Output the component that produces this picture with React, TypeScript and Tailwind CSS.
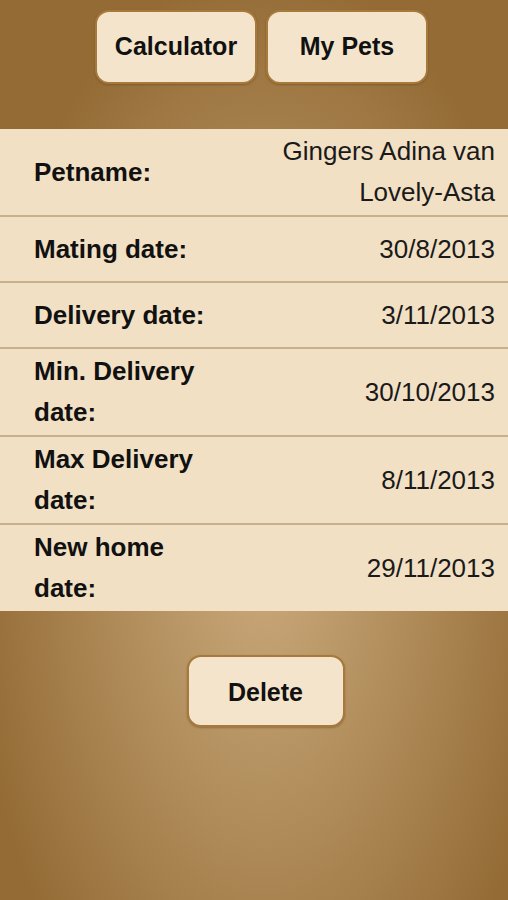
import React from "react";

interface Row {
  label: string;
  value: string;
}

const rows: Row[] = [
  { label: "Petname:", value: "Gingers Adina van Lovely-Asta" },
  { label: "Mating date:", value: "30/8/2013" },
  { label: "Delivery date:", value: "3/11/2013" },
  { label: "Min. Delivery date:", value: "30/10/2013" },
  { label: "Max Delivery date:", value: "8/11/2013" },
  { label: "New home date:", value: "29/11/2013" },
];

function TanButton({ children, className = "" }: { children: React.ReactNode; className?: string }) {
  return (
    <button
      className={
        "flex items-center justify-center rounded-[14px] border-2 border-[#a7793a] bg-[#f4e4cb] text-[25px] font-bold text-[#111] shadow-[0_1px_2px_rgba(80,50,10,0.35)] " +
        className
      }
    >
      {children}
    </button>
  );
}

export default function App() {
  return (
    <div
      className="flex h-[900px] w-[508px] flex-col bg-[radial-gradient(ellipse_58%_64%_at_52%_60%,#ccaa7c_0%,#ad8957_55%,#946b35_100%)]"
      style={{ fontFamily: '"Liberation Sans", Arial, sans-serif' }}
    >
      {/* Top tabs */}
      <div className="flex justify-center gap-[9px] pl-[15px] pt-[10px]">
        <TanButton className="h-[74px] w-[162px]">Calculator</TanButton>
        <TanButton className="h-[74px] w-[162px]">My Pets</TanButton>
      </div>

      {/* Detail table */}
      <div className="mt-[45px] bg-[#f2e0c4]">
        {rows.map((row, i) => (
          <div
            key={row.label}
            className={
              "flex min-h-[66px] items-center py-[2px] pl-[34px] pr-[13px] text-[26px] leading-[41px] text-[#111] " +
              (i < rows.length - 1 ? "border-b-2 border-[#c8b08c]" : "")
            }
          >
            <div className="w-[185px] shrink-0 font-bold">{row.label}</div>
            <div className="flex-1 text-right text-[#1a1a1a]">{row.value}</div>
          </div>
        ))}
      </div>

      {/* Delete */}
      <div className="flex justify-center pl-[23px] pt-[44px]">
        <TanButton className="h-[72px] w-[158px] pt-[4px]">Delete</TanButton>
      </div>
    </div>
  );
}
